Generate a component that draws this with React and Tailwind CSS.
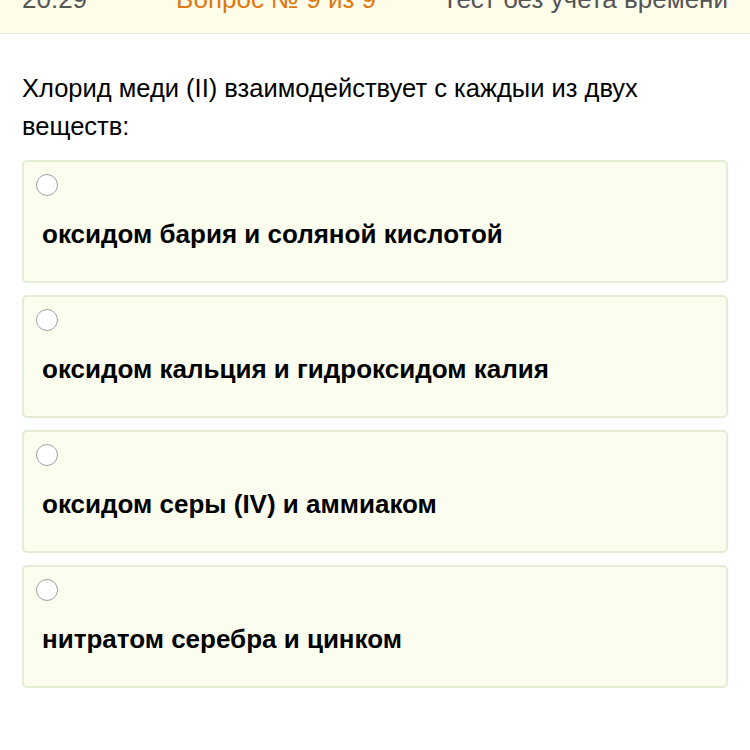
import React from 'react';

const options = [
  'оксидом бария и соляной кислотой',
  'оксидом кальция и гидроксидом калия',
  'оксидом серы (IV) и аммиаком',
  'нитратом серебра и цинком',
];

function Option({ text }) {
  return (
    <label className="flex flex-col rounded-[5px] border-2 border-[#e3edd4] bg-[#fbfeee] pt-[12px] pl-[12px] pb-[33px]">
      <span className="block h-[22px] w-[22px] rounded-full border border-[#a0a0a0] bg-white" />
      <span className="mt-[24px] pl-[6px] text-[26px] font-bold leading-[28px] text-black">
        {text}
      </span>
    </label>
  );
}

export default function App() {
  return (
    <div className="h-[750px] w-[750px] overflow-hidden bg-white font-['Liberation_Sans',Arial,sans-serif]">
      <header className="h-[34px] overflow-hidden border-b border-[#ebebe4] bg-[#fefde9]">
        <div className="-mt-[16px] flex px-[22px] text-[26px] leading-[30px]">
          <span className="text-[#555555]">20:29</span>
          <span className="ml-[89px] text-[#e0780f]">Вопрос № 9 из 9</span>
          <span className="ml-auto text-[#555555]">Тест без учета времени</span>
        </div>
      </header>

      <main className="px-[22px] pt-[35px]">
        <p className="text-[25.5px] leading-[38px] text-black">
          Хлорид меди (II) взаимодействует с каждыи из двух веществ:
        </p>

        <div className="mt-[15px] flex flex-col gap-[12px]">
          {options.map((o) => (
            <Option key={o} text={o} />
          ))}
        </div>
      </main>
    </div>
  );
}
